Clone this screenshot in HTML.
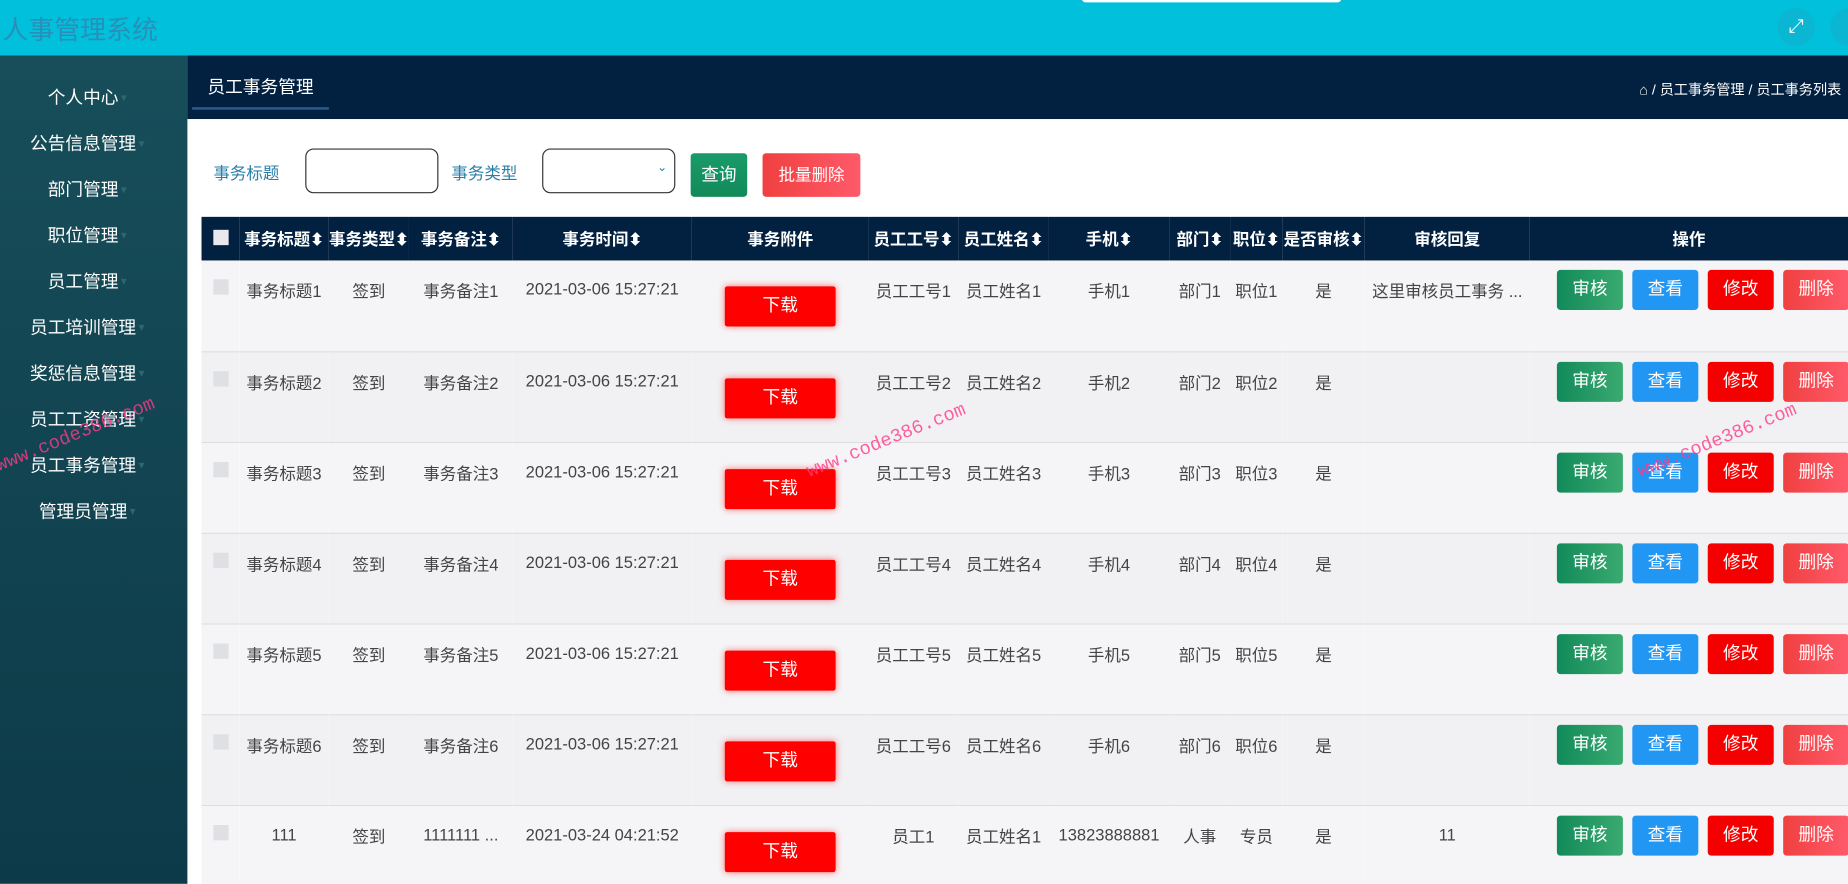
<!DOCTYPE html>
<html><head><meta charset="utf-8">
<style>
*{margin:0;padding:0;box-sizing:border-box}
body{width:1848px;height:884px;overflow:hidden;font-family:"Liberation Sans","Noto Sans CJK SC",sans-serif;background:#fff}
#w{width:1568px;height:750px;transform:scale(1.17857);transform-origin:0 0;position:relative;overflow:hidden}
.hdr{position:absolute;left:0;top:0;width:1568px;height:47px;background:#00c0dc}
.hdr .t{position:absolute;left:2px;top:8px;font-size:22px;color:#2a8fb8}
.ic{position:absolute;top:7px;width:32px;height:32px;border-radius:50%;background:#0bb6d2}
.side{position:absolute;left:0;top:47px;width:159px;height:703px;background:linear-gradient(#174e5a,#0d3a48)}
.side div{height:39px;line-height:39px;color:#fff;font-size:15px;text-align:center;position:relative;padding-right:18px}
.side div:first-child{margin-top:17px}
.side div:after{content:"▾";color:#2d6570;font-size:10px;margin-left:2px;position:absolute}
.nav{position:absolute;left:159px;top:47px;width:1409px;height:54px;background:#022040}
.nav .tab{position:absolute;left:4px;top:14px;width:116px;height:32px;border-bottom:2px solid #2c5f90;color:#fff;font-size:15px;padding-left:13px;line-height:28px}
.nav .bc{position:absolute;left:1232px;top:20px;color:#fff;font-size:12px;white-space:nowrap}
.lbl{position:absolute;top:137px;font-size:14px;color:#2a7fa8}
.inp{position:absolute;top:126px;width:113px;height:38px;border:1px solid #333;border-radius:7px;background:#fff}
.btn{position:absolute;color:#fff;font-size:15px;text-align:center;border-radius:3px}
table{position:absolute;left:171px;top:184px;border-collapse:collapse;width:1420px;table-layout:fixed}
th{background:#022040;color:#fff;font-size:14px;height:37px;font-weight:bold;white-space:nowrap;border:0}
td{height:77px;vertical-align:top;padding-top:16px;text-align:center;font-size:14px;color:#444;border:0;border-bottom:1px solid #ddd;background:#f1f0f3;white-space:nowrap;position:relative}
tr:nth-child(even) td{background:#f5f5f7}
.cb{display:inline-block;width:13px;height:13px;background:#dfe0e4}
th .cb{background:#e8e8ee}
.dl{display:inline-block;width:94px;height:34px;background:#ff0000;color:#fff;font-size:15px;line-height:34px;border-radius:2px;margin-top:6px;box-shadow:0 0 6px rgba(255,0,0,.5)}
.ops{position:absolute;left:23px;top:8px;white-space:nowrap;text-align:left}
.ops span{display:inline-block;width:56px;height:34px;line-height:34px;text-align:center;color:#fff;font-size:15px;border-radius:3px;margin-right:8px}
.a{background:linear-gradient(90deg,#128a5a,#3aaa70)}.v{background:#2196f3}.e{background:#f50000}.d{background:linear-gradient(90deg,#f04040,#ff5a6a)}
.wm{position:absolute;color:#ff3a8a;font-size:16px;font-family:"Liberation Mono",monospace;transform:rotate(-22deg);opacity:.8}
</style></head><body><div id="w">
<div class="hdr"><div class="t">人事管理系统</div>
<div style="position:absolute;left:918px;top:-4px;width:220px;height:6px;background:#fff;border-radius:3px"></div>
<div class="ic" style="left:1508px;color:#fff;text-align:center;line-height:32px;font-size:16px">⤢</div>
<div class="ic" style="left:1553px"></div></div>
<div class="side"><div>个人中心</div><div>公告信息管理</div><div>部门管理</div><div>职位管理</div><div>员工管理</div><div>员工培训管理</div><div>奖惩信息管理</div><div>员工工资管理</div><div>员工事务管理</div><div>管理员管理</div></div>
<div class="nav"><div class="tab">员工事务管理</div><div class="bc">⌂ / 员工事务管理 / 员工事务列表</div></div>
<div class="lbl" style="left:181px">事务标题</div><div class="inp" style="left:259px"></div>
<div class="lbl" style="left:383px">事务类型</div><div class="inp" style="left:460px"><span style="position:absolute;right:6px;top:10px;font-size:10px;color:#2a7fa8">⌄</span></div>
<div class="btn" style="left:586px;top:130px;width:48px;height:37px;line-height:37px;background:linear-gradient(#1a9a6a,#128a5a)">查询</div>
<div class="btn" style="left:647px;top:130px;width:83px;height:37px;line-height:37px;background:linear-gradient(90deg,#f04040,#ff5a6a);font-size:14px">批量删除</div>
<table>
<colgroup><col width="32"><col width="76"><col width="68"><col width="88"><col width="152"><col width="150"><col width="76"><col width="77"><col width="102"><col width="52"><col width="44"><col width="70"><col width="140"><col width="433"></colgroup>
<tr><th><span class="cb"></span></th><th>事务标题⬍</th><th>事务类型⬍</th><th>事务备注⬍</th><th>事务时间⬍</th><th>事务附件</th><th>员工工号⬍</th><th>员工姓名⬍</th><th>手机⬍</th><th>部门⬍</th><th>职位⬍</th><th>是否审核⬍</th><th>审核回复</th><th style="text-align:left;padding-left:121px">操作</th></tr>
<tr><td><span class="cb"></span></td><td>事务标题1</td><td>签到</td><td>事务备注1</td><td>2021-03-06 15:27:21</td><td><span class="dl">下载</span></td><td>员工工号1</td><td>员工姓名1</td><td>手机1</td><td>部门1</td><td>职位1</td><td>是</td><td>这里审核员工事务 ...</td><td><div class="ops"><span class="a">审核</span><span class="v">查看</span><span class="e">修改</span><span class="d">删除</span></div></td></tr>
<tr><td><span class="cb"></span></td><td>事务标题2</td><td>签到</td><td>事务备注2</td><td>2021-03-06 15:27:21</td><td><span class="dl">下载</span></td><td>员工工号2</td><td>员工姓名2</td><td>手机2</td><td>部门2</td><td>职位2</td><td>是</td><td></td><td><div class="ops"><span class="a">审核</span><span class="v">查看</span><span class="e">修改</span><span class="d">删除</span></div></td></tr>
<tr><td><span class="cb"></span></td><td>事务标题3</td><td>签到</td><td>事务备注3</td><td>2021-03-06 15:27:21</td><td><span class="dl">下载</span></td><td>员工工号3</td><td>员工姓名3</td><td>手机3</td><td>部门3</td><td>职位3</td><td>是</td><td></td><td><div class="ops"><span class="a">审核</span><span class="v">查看</span><span class="e">修改</span><span class="d">删除</span></div></td></tr>
<tr><td><span class="cb"></span></td><td>事务标题4</td><td>签到</td><td>事务备注4</td><td>2021-03-06 15:27:21</td><td><span class="dl">下载</span></td><td>员工工号4</td><td>员工姓名4</td><td>手机4</td><td>部门4</td><td>职位4</td><td>是</td><td></td><td><div class="ops"><span class="a">审核</span><span class="v">查看</span><span class="e">修改</span><span class="d">删除</span></div></td></tr>
<tr><td><span class="cb"></span></td><td>事务标题5</td><td>签到</td><td>事务备注5</td><td>2021-03-06 15:27:21</td><td><span class="dl">下载</span></td><td>员工工号5</td><td>员工姓名5</td><td>手机5</td><td>部门5</td><td>职位5</td><td>是</td><td></td><td><div class="ops"><span class="a">审核</span><span class="v">查看</span><span class="e">修改</span><span class="d">删除</span></div></td></tr>
<tr><td><span class="cb"></span></td><td>事务标题6</td><td>签到</td><td>事务备注6</td><td>2021-03-06 15:27:21</td><td><span class="dl">下载</span></td><td>员工工号6</td><td>员工姓名6</td><td>手机6</td><td>部门6</td><td>职位6</td><td>是</td><td></td><td><div class="ops"><span class="a">审核</span><span class="v">查看</span><span class="e">修改</span><span class="d">删除</span></div></td></tr>
<tr><td><span class="cb"></span></td><td>111</td><td>签到</td><td>1111111 ...</td><td>2021-03-24 04:21:52</td><td><span class="dl">下载</span></td><td>员工1</td><td>员工姓名1</td><td>13823888881</td><td>人事</td><td>专员</td><td>是</td><td>11</td><td><div class="ops"><span class="a">审核</span><span class="v">查看</span><span class="e">修改</span><span class="d">删除</span></div></td></tr>
</table>
<div class="wm" style="left:-8px;top:360px">www.code386.com</div>
<div class="wm" style="left:680px;top:365px">www.code386.com</div>
<div class="wm" style="left:1385px;top:365px">www.code386.com</div>
</div></body></html>
